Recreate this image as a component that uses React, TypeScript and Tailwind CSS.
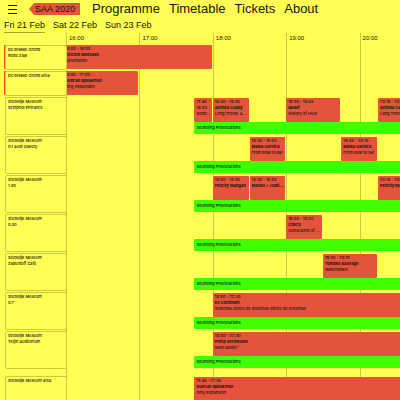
import React from "react";

type Slot = {
  // Quarter hours after 16:00; a start of -1 means the event began earlier.
  start: number;
  end: number;
  time: string;
  artist?: string;
  title?: string;
};

type Venue = {
  name: string;
  room?: string;
  slots: Slot[];
  background?: string;
  spaced?: boolean;
};

const LAST = 40;
const PROVOCATIONS = "Sounding Provocations";

const venues: Venue[] = [
  {
    name: "De Brakke Grond",
    room: "Rode Zaal",
    slots: [{ start: -1, end: 8, time: "10:00 - 18:00", artist: "Vincent Meessen", title: "Ultramarine" }],
  },
  {
    name: "De Brakke Grond area",
    slots: [{ start: -1, end: 4, time: "10:00 - 17:00", artist: "Duncan Speakman", title: "Only Expansion" }],
  },
  {
    name: "Stedelijk Museum",
    room: "Schiphol Entrance",
    background: PROVOCATIONS,
    slots: [
      { start: 7, end: 8, time: "17:45 - 18:00", title: "Sonic Acts" },
      { start: 8, end: 10, time: "18:00 - 18:30", artist: "Anthea Caddy", title: "Long Throw: Amsterdam" },
      { start: 12, end: 15, time: "19:00 - 19:45", artist: "Sadaf", title: "History of Heat" },
      { start: 17, end: 19, time: "20:15 - 20:45", artist: "Anthea Caddy", title: "Long Throw: Amsterdam" },
    ],
  },
  {
    name: "Stedelijk Museum",
    room: "0.1 Audi Gallery",
    background: PROVOCATIONS,
    slots: [
      { start: 10, end: 12, time: "18:30 - 19:00", artist: "Maika Garnica", title: "From Bow to Ear" },
      { start: 15, end: 17, time: "19:45 - 20:15", artist: "Maika Garnica", title: "From Bow to Ear" },
    ],
  },
  {
    name: "Stedelijk Museum",
    room: "1.30",
    background: PROVOCATIONS,
    slots: [
      { start: 8, end: 10, time: "18:00 - 18:30", artist: "Felicity Mangan" },
      { start: 10, end: 12, time: "18:30 - 19:00", artist: "Malibu + Judith Hamann" },
      { start: 17, end: 19, time: "20:15 - 20:45", artist: "Felicity Mangan" },
    ],
  },
  {
    name: "Stedelijk Museum",
    room: "0.30",
    background: PROVOCATIONS,
    slots: [{ start: 12, end: 14, time: "19:00 - 19:30", artist: "Cõvco", title: "Consciente of Being" }],
  },
  {
    name: "Stedelijk Museum",
    room: "Zadelhoff Café",
    background: PROVOCATIONS,
    slots: [{ start: 14, end: 17, time: "19:30 - 20:15", artist: "Tomoko Sauvage", title: "Waterbowls" }],
  },
  {
    name: "Stedelijk Museum",
    room: "0.7",
    background: PROVOCATIONS,
    slots: [
      { start: 8, end: 26, time: "18:00 - 22:30", artist: "Ex Continent", title: "Sistemas Dintre de Sistemas Dintre de Sistemas" },
    ],
  },
  {
    name: "Stedelijk Museum",
    room: "Teijin Auditorium",
    background: PROVOCATIONS,
    slots: [{ start: 8, end: 26, time: "18:00 - 22:30", artist: "Philip Vermeulen", title: "More Moiré²" }],
  },
  {
    name: "Stedelijk Museum area",
    spaced: true,
    slots: [{ start: 7, end: 22, time: "17:45 - 21:30", artist: "Duncan Speakman", title: "Only Expansion" }],
  },
];

const hours = ["16:00", "17:00", "18:00", "19:00", "20:00", "21:00", "22:00", "23:00", "00:00", "01:00"];
const columns = "grid grid-cols-[62px_repeat(40,minmax(0,1fr))]";
const column = (start: number, end: number) => ({ gridColumn: `${start + 2} / ${end + 2}` });

function SlotCard({ slot }: { slot: Slot }) {
  const early = slot.start < 0;
  return (
    <a
      href="#event"
      style={column(slot.start, slot.end)}
      className={`row-start-1 mr-px h-6 overflow-hidden rounded-[1px] bg-[#e6533c] pt-px leading-[6px] ${
        early ? "pl-[61px]" : "mt-px pl-[2px]"
      }`}
    >
      <div>{slot.time}</div>
      {slot.artist && <div className="truncate font-bold">{slot.artist}</div>}
      {slot.title && <div className="truncate">{slot.title}</div>}
    </a>
  );
}

function VenueRow({ venue }: { venue: Venue }) {
  return (
    <div className={`${columns} ${venue.background ? "grid-rows-[25px_13px]" : ""} ${venue.spaced ? "mt-[6px]" : ""}`}>
      <div
        className={`z-10 col-start-1 row-start-1 ml-px -mr-px rounded-[2px] border border-[#cbcb43] bg-[#ffff54] pt-px pl-[2px] leading-[6px] ${
          venue.background ? "row-span-2" : "h-[25px]"
        }`}
      >
        <div>{venue.name}</div>
        {venue.room && <div>{venue.room}</div>}
      </div>
      {venue.slots.map((slot) => (
        <SlotCard key={slot.start} slot={slot} />
      ))}
      {venue.background && (
        <a
          href="#provocations"
          style={column(7, LAST)}
          className="row-start-2 flex h-3 items-center rounded-[1px] bg-[#3fff00] pl-[2px] leading-[6px]"
        >
          {venue.background}
        </a>
      )}
    </div>
  );
}

export default function App() {
  return (
    <div className="h-screen overflow-hidden bg-[#ffff54] font-['Liberation_Sans',Arial,sans-serif] text-[#14140a]">
      <header>
        <nav className="flex h-[18px] items-center pl-2 text-[13px] leading-[18px]">
          <button type="button" aria-label="Menu" className="mr-3 flex w-[9px] flex-col gap-[3px]">
            <span className="h-px bg-current" />
            <span className="h-px bg-current" />
            <span className="h-px bg-current" />
          </button>
          <a
            href="#home"
            className="mr-3 flex h-3 w-[51px] items-center bg-[#e6533c] pl-[6px] text-[9px] whitespace-nowrap [clip-path:polygon(0_50%,10%_0,100%_0,100%_100%,10%_100%)]"
          >
            SAA 2020
          </a>
          <div className="flex gap-[9px]">
            <a href="#programme">Programme</a>
            <a href="#timetable">Timetable</a>
            <a href="#tickets">Tickets</a>
            <a href="#about">About</a>
          </div>
        </nav>
        <div className="flex h-[15px] gap-2 pl-[4px] text-[9px] leading-[14px]">
          <a href="#fri" className="border-b border-[#a5a536]">Fri 21 Feb</a>
          <a href="#sat">Sat 22 Feb</a>
          <a href="#sun">Sun 23 Feb</a>
        </div>
      </header>

      <main className="ml-1 grid w-[796px] font-[Inter,sans-serif] text-[4px] font-medium">
        <div className={`${columns} col-start-1 row-start-1 text-[6px] leading-[11px]`}>
          {hours.map((hour, i) => (
            <div
              key={hour}
              style={column(i * 4, i * 4 + 4)}
              className="row-start-1 border-l border-[#c9c942] pl-[2px] font-['Liberation_Sans',Arial,sans-serif]"
            >
              {hour}
            </div>
          ))}
        </div>
        <div className="col-start-1 row-start-1 flex flex-col gap-px pt-3">
          {venues.map((venue, i) => (
            <VenueRow key={i} venue={venue} />
          ))}
        </div>
      </main>
    </div>
  );
}
